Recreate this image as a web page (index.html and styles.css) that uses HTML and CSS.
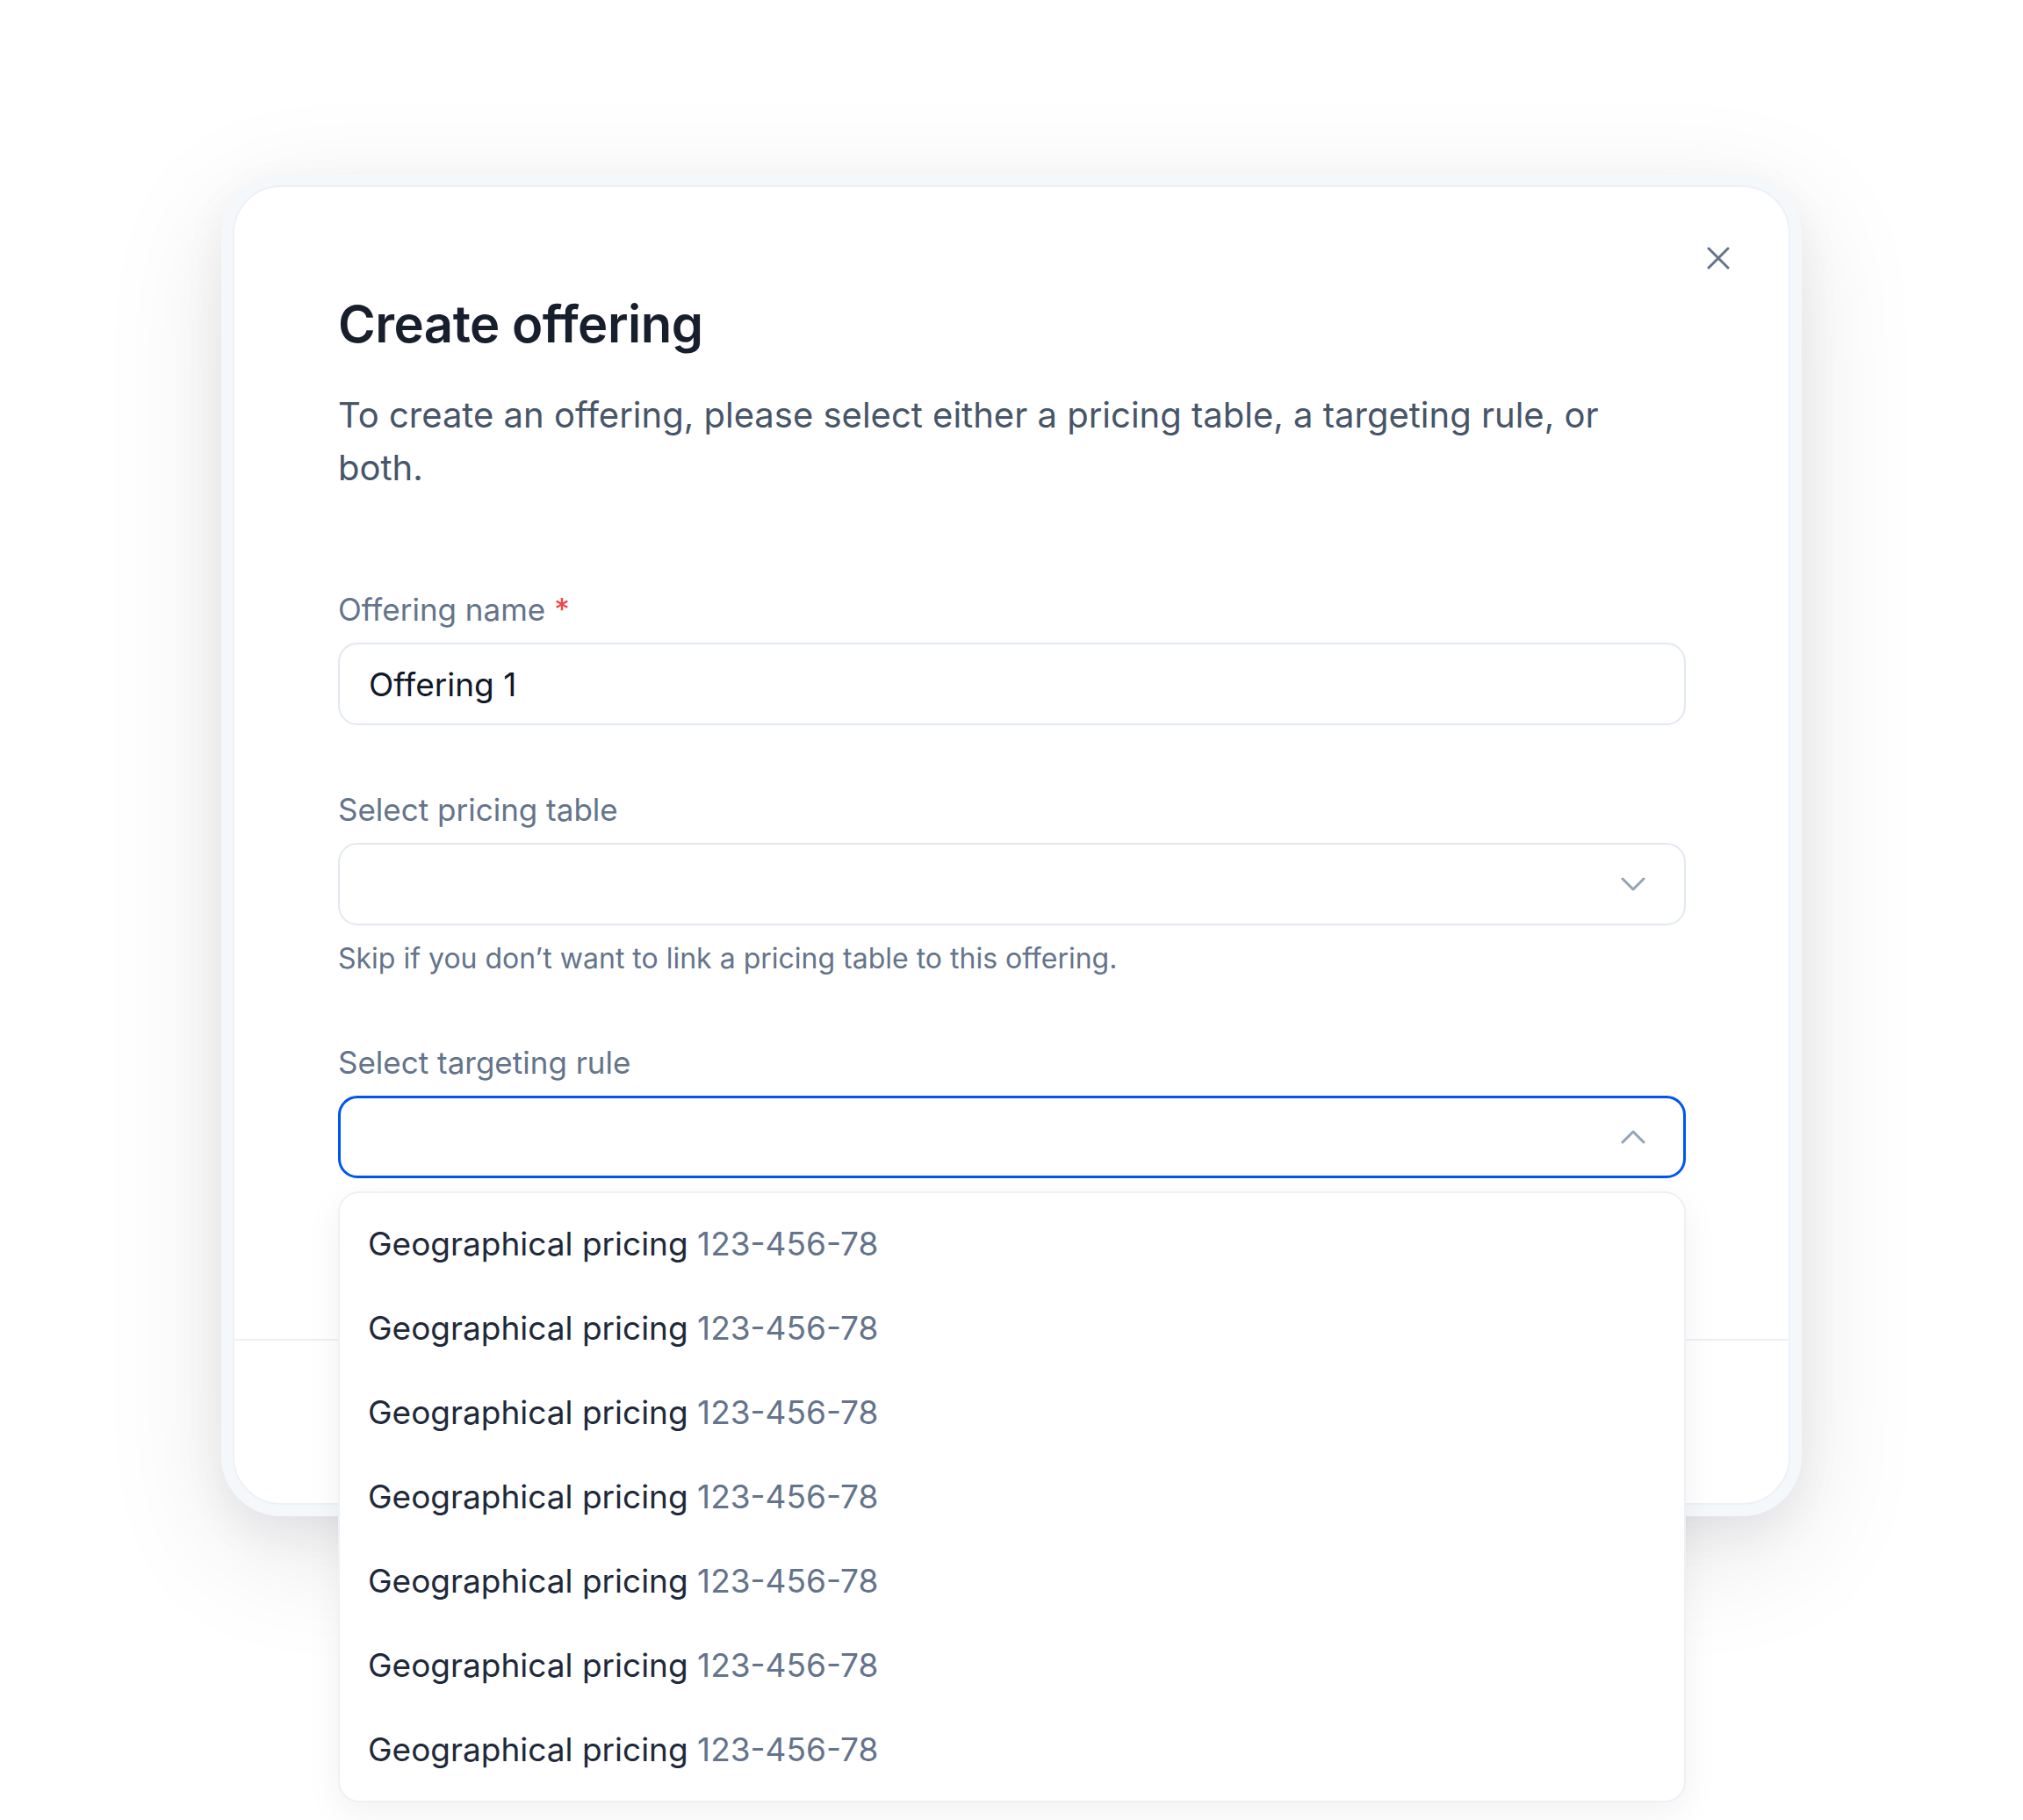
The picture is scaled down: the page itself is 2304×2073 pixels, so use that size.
FILE: index.html
```html
<!DOCTYPE html>
<html lang="en">
  <head>
    <meta charset="UTF-8" />
    <meta name="viewport" content="width=device-width, initial-scale=1.0" />
    <title>Create offering</title>
    <link rel="stylesheet" href="styles.css">
  </head>
  <body>
    <div class="modal-frame">
      <div class="modal">
        <button class="close-btn" aria-label="Close">
          <svg width="26" height="26" viewBox="0 0 26 26">
            <path d="M2 2 L24 24 M24 2 L2 24" stroke="#64748b" stroke-width="3" stroke-linecap="round" fill="none" />
          </svg>
        </button>

        <div class="modal-body">
          <h1 class="title">Create offering</h1>
          <p class="description">
            To create an offering, please select either a pricing table, a targeting rule, or both.
          </p>

          <div class="field">
            <label class="label">Offering name <span class="required">*</span></label>
            <div class="input">Offering 1</div>
          </div>

          <div class="field">
            <label class="label">Select pricing table</label>
            <div class="input select">
              <svg width="28" height="16" viewBox="0 0 28 16">
                <polyline points="2,2 14,14 26,2" stroke="#94a3b8" stroke-width="3" stroke-linecap="round" stroke-linejoin="round" fill="none" />
              </svg>
            </div>
            <p class="help">Skip if you don’t want to link a pricing table to this offering.</p>
          </div>

          <div class="field dropdown-field">
            <label class="label">Select targeting rule</label>
            <div class="input select focused">
              <svg width="28" height="16" viewBox="0 0 28 16">
                <polyline points="2,14 14,2 26,14" stroke="#94a3b8" stroke-width="3" stroke-linecap="round" stroke-linejoin="round" fill="none" />
              </svg>
            </div>

            <ul class="dropdown">
              <li>Geographical pricing <span class="code">123-456-78</span></li>
              <li>Geographical pricing <span class="code">123-456-78</span></li>
              <li>Geographical pricing <span class="code">123-456-78</span></li>
              <li>Geographical pricing <span class="code">123-456-78</span></li>
              <li>Geographical pricing <span class="code">123-456-78</span></li>
              <li>Geographical pricing <span class="code">123-456-78</span></li>
              <li>Geographical pricing <span class="code">123-456-78</span></li>
            </ul>
          </div>
        </div>

        <div class="modal-footer"></div>
      </div>
    </div>
  </body>
</html>
```

FILE: styles.css
```css
html,
body {
  margin: 0;
  padding: 0;
  height: 100%;
  overflow: hidden;
  background: #ffffff;
  font-family: Inter, "Noto Sans", sans-serif;
}

.modal-frame {
  width: 1800px;
  margin: 198px auto 0;
  padding: 13px;
  box-sizing: border-box;
  background: #f5f8fb;
  border-radius: 68px;
  box-shadow: 0 40px 140px rgba(15, 23, 42, 0.1), 0 20px 50px rgba(15, 23, 42, 0.06);
}

.modal {
  position: relative;
  background: #fff;
  border: 2px solid #edf1f6;
  border-radius: 55px;
}

.close-btn {
  position: absolute;
  top: 61px;
  right: 60px;
  width: 40px;
  height: 40px;
  padding: 0;
  border: none;
  background: none;
  display: flex;
  align-items: center;
  justify-content: center;
  cursor: pointer;
}

.modal-body {
  padding: 122px 117px 183px 118px;
}

.title {
  margin: 0 0 40px;
  font-size: 58px;
  line-height: 68px;
  font-weight: 600;
  color: #171e2c;
  letter-spacing: -0.5px;
}

.description {
  margin: 0 0 107px;
  font-size: 40px;
  line-height: 60px;
  color: #475569;
}

.field {
  margin-bottom: 72px;
}

.field:last-child {
  margin-bottom: 0;
}

.label {
  display: block;
  margin-bottom: 14px;
  font-size: 35px;
  line-height: 48px;
  color: #64748b;
}

.required {
  color: #ef4444;
}

.input {
  height: 94px;
  box-sizing: border-box;
  padding: 0 33px;
  display: flex;
  align-items: center;
  border: 2px solid #e2e8f0;
  border-radius: 22px;
  font-size: 37px;
  color: #111827;
  background: #fff;
}

.select {
  justify-content: flex-end;
  padding-right: 44px;
}

.select.focused {
  border: 3px solid #0055f2;
  padding-right: 43px;
}

.help {
  margin: 16px 0 0;
  font-size: 32px;
  line-height: 44px;
  color: #64748b;
}

.dropdown-field {
  position: relative;
}

.dropdown {
  position: absolute;
  top: calc(100% + 15px);
  left: 0;
  right: 0;
  margin: 0;
  padding: 9px 0 11px;
  list-style: none;
  background: #fff;
  border: 2px solid #edf1f6;
  border-radius: 24px;
  box-shadow: 0 12px 40px rgba(15, 23, 42, 0.06);
  z-index: 2;
}

.dropdown li {
  height: 96px;
  display: flex;
  align-items: center;
  padding: 0 32px;
  font-size: 37px;
  color: #1e293b;
  white-space: pre;
}

.code {
  color: #64748b;
}

.modal-footer {
  height: 185px;
  border-top: 2px solid #edf1f6;
}
```
